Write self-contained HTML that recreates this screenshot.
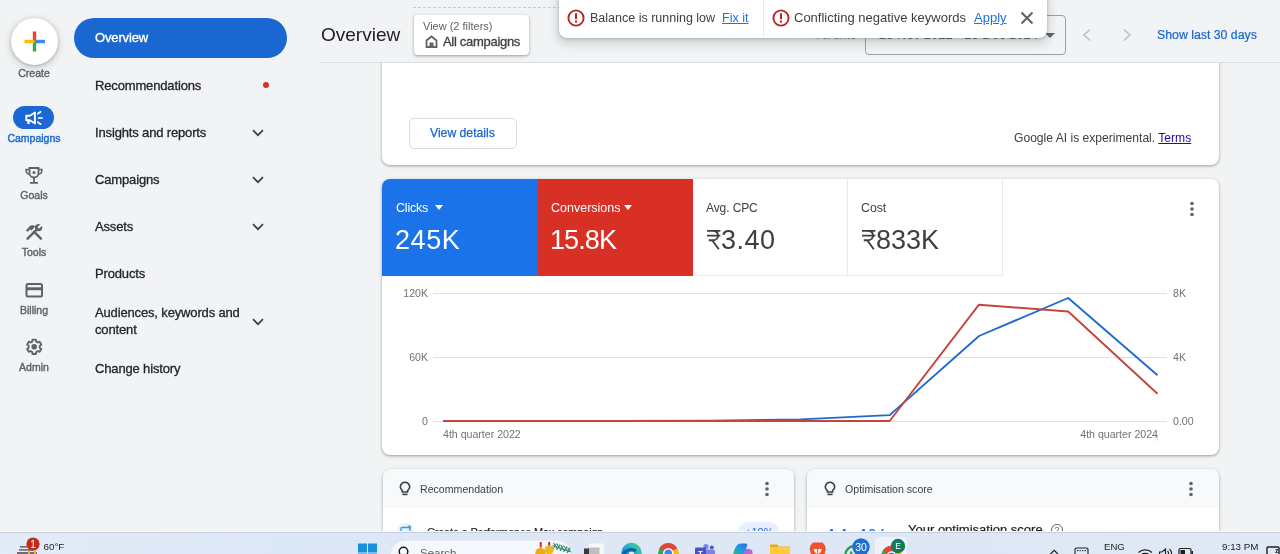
<!DOCTYPE html>
<html><head><meta charset="utf-8">
<style>
*{box-sizing:border-box;margin:0;padding:0}
html,body{will-change:transform;width:1280px;height:554px;overflow:hidden;background:#f1f3f4;font-family:"Liberation Sans",sans-serif;color:#202124;position:relative}
.a{position:absolute;white-space:nowrap}
.rail-lbl{position:absolute;left:0;width:68px;text-align:center;font-size:10.5px;color:#5f6368;line-height:12px;-webkit-text-stroke-width:.4px}
.nav{position:absolute;left:95px;font-size:13px;color:#232528;line-height:16px;-webkit-text-stroke-width:.3px;letter-spacing:-.15px;white-space:nowrap}
.chev{position:absolute;left:251px;width:14px;height:14px}
.card{position:absolute;background:#fff;border-radius:8px;box-shadow:0 1px 2px rgba(60,64,67,.3),0 1px 3px 1px rgba(60,64,67,.15)}
</style></head>
<body>
<!-- left rail -->
<div class="a" style="left:11px;top:18px;width:47px;height:47px;border-radius:50%;background:#fff;box-shadow:0 1px 3px rgba(60,64,67,.3),0 2px 6px 2px rgba(60,64,67,.15)"></div>
<svg class="a" style="left:24px;top:31px" width="21" height="21" viewBox="0 0 21 21">
<rect x="8.8" y="0.5" width="3.4" height="10" fill="#ea4335"/>
<rect x="10.5" y="8.8" width="10.5" height="3.4" fill="#4285f4"/>
<rect x="8.8" y="10.5" width="3.4" height="10" fill="#34a853"/>
<rect x="0.5" y="8.8" width="10" height="3.4" fill="#fbbc04"/>
</svg>
<div class="rail-lbl" style="top:67px">Create</div>
<div class="a" style="left:13px;top:106px;width:41px;height:23px;border-radius:12px;background:#1b67d3"></div>
<svg class="a" style="left:14px;top:100px" width="40" height="30" viewBox="14 100 40 30"><path d="M26.3 115.7h3.6l5-3.2v11l-5-3.2h-3.6z" fill="none" stroke="#fff" stroke-width="1.9" stroke-linejoin="round"/><rect x="27.3" y="120" width="2.4" height="4" fill="#fff"/><path d="M37.8 113.8l2.8-2M38.6 118h3.6M37.8 122.2l2.8 2" stroke="#fff" stroke-width="1.7" stroke-linecap="round"/></svg>
<div class="rail-lbl" style="top:132px;color:#1b67d3">Campaigns</div>
<svg class="a" style="left:25px;top:167px" width="18" height="17" viewBox="0 0 18 17"><path d="M4.5 1h9v5a4.5 4.5 0 0 1-9 0z" fill="none" stroke="#5f6368" stroke-width="1.8"/><path d="M4.5 2.5H1.2v1.5a3 3 0 0 0 3.3 3M13.5 2.5h3.3v1.5a3 3 0 0 1-3.3 3" fill="none" stroke="#5f6368" stroke-width="1.6"/><circle cx="9" cy="5.5" r="1.5" fill="#5f6368"/><path d="M9 10.5v4.5M5 15.8h8" stroke="#5f6368" stroke-width="1.8"/></svg>
<div class="rail-lbl" style="top:189px">Goals</div>
<svg class="a" style="left:20px;top:220px" width="28" height="24" viewBox="20 220 28 24"><path d="M27.6 238.6L36.4 229.8" stroke="#5f6368" stroke-width="2.5" stroke-linecap="round"/><circle cx="38.6" cy="227.6" r="3.7" fill="#5f6368"/><path d="M38.9 227.3l3.2-3.2" stroke="#f1f3f4" stroke-width="2.3" stroke-linecap="round"/><path d="M40.9 238.6L34.2 231.9" stroke="#5f6368" stroke-width="2.5" stroke-linecap="round"/><path d="M25.8 230.4l4.6-4.8 3.4-.4 1.4 1.4-3.6 3.9-1.6-1-2.2 2.2z" fill="#5f6368"/></svg>
<div class="rail-lbl" style="top:246px">Tools</div>
<svg class="a" style="left:25px;top:282px" width="18" height="16" viewBox="0 0 18 16"><rect x="1.5" y="2" width="15.5" height="12.6" rx="1.6" fill="none" stroke="#5f6368" stroke-width="2"/><rect x="1.5" y="5.3" width="15.5" height="2.9" fill="#5f6368"/></svg>
<div class="rail-lbl" style="top:304px">Billing</div>
<svg class="a" style="left:20px;top:334px" width="28" height="26" viewBox="20 334 28 26"><path d="M32.54 339.59 L35.86 339.59 L36.21 341.57 L37.72 342.45 L39.61 341.75 L41.28 344.64 L39.73 345.92 L39.73 347.68 L41.28 348.96 L39.61 351.85 L37.72 351.15 L36.21 352.03 L35.86 354.01 L32.54 354.01 L32.19 352.03 L30.68 351.15 L28.79 351.85 L27.12 348.96 L28.67 347.68 L28.67 345.92 L27.12 344.64 L28.79 341.75 L30.68 342.45 L32.19 341.57Z" fill="none" stroke="#5f6368" stroke-width="1.9" stroke-linejoin="round"/><circle cx="34.2" cy="346.8" r="2.8" fill="#5f6368"/></svg>
<div class="rail-lbl" style="top:361px">Admin</div>

<!-- nav -->
<div class="a" style="left:74px;top:18px;width:213px;height:39.5px;border-radius:20px;background:#1a67d2"></div>
<div class="nav" style="top:30px;color:#fff;-webkit-text-stroke-width:.35px">Overview</div>
<div class="nav" style="top:78px">Recommendations</div>
<div class="a" style="left:263px;top:82px;width:6px;height:6px;border-radius:50%;background:#d93025"></div>
<div class="nav" style="top:125px">Insights and reports</div>
<div class="nav" style="top:172px">Campaigns</div>
<div class="nav" style="top:219px">Assets</div>
<div class="nav" style="top:266px">Products</div>
<div class="nav" style="top:304px;line-height:17px">Audiences, keywords and<br>content</div>
<div class="nav" style="top:361px">Change history</div>
<svg class="a" style="left:251px;top:128px" width="14" height="9" viewBox="0 0 14 9"><path d="M2 2.2L7 7.2l5-5" fill="none" stroke="#3c4043" stroke-width="1.7"/></svg>
<svg class="a" style="left:251px;top:175px" width="14" height="9" viewBox="0 0 14 9"><path d="M2 2.2L7 7.2l5-5" fill="none" stroke="#3c4043" stroke-width="1.7"/></svg>
<svg class="a" style="left:251px;top:222px" width="14" height="9" viewBox="0 0 14 9"><path d="M2 2.2L7 7.2l5-5" fill="none" stroke="#3c4043" stroke-width="1.7"/></svg>
<svg class="a" style="left:251px;top:317px" width="14" height="9" viewBox="0 0 14 9"><path d="M2 2.2L7 7.2l5-5" fill="none" stroke="#3c4043" stroke-width="1.7"/></svg>


<!-- header -->
<div class="a" style="left:320px;top:62px;width:960px;height:1px;background:#dadce0"></div>
<div class="a" style="left:413px;top:7px;width:148px;height:0;border-top:1px dashed #c8cbcf"></div>
<div class="a" style="left:321px;top:23px;font-size:19px;line-height:24px;color:#202124">Overview</div>
<div class="a" style="left:414px;top:15px;width:115px;height:40px;background:#fff;border-radius:4px;box-shadow:0 1px 2px rgba(60,64,67,.3),0 1px 3px 1px rgba(60,64,67,.15)"></div>
<div class="a" style="left:423px;top:20px;font-size:11px;line-height:13px;color:#5f6368">View (2 filters)</div>
<svg class="a" style="left:425px;top:35px" width="13" height="13" viewBox="0 0 13 13"><path d="M1.5 12V5.5L6.5 1.5l5 4V12z" fill="none" stroke="#5f6368" stroke-width="1.8"/><rect x="4.5" y="7.5" width="4" height="4.5" fill="#5f6368"/></svg>
<div class="a" style="left:443px;top:34px;font-size:13px;line-height:16px;color:#3c4043;-webkit-text-stroke-width:.3px;letter-spacing:-.3px">All campaigns</div>

<!-- behind-toast date -->
<div class="a" style="left:817px;top:27px;font-size:12px;line-height:16px;color:#70757a">All time</div>
<div class="a" style="left:865px;top:15px;width:201px;height:40px;border:1px solid #9aa0a6;border-radius:4px"></div>
<div class="a" style="left:879px;top:27px;font-size:13px;line-height:16px;color:#5f6368">25 Nov 2022 - 25 Dec 2024</div>
<div class="a" style="left:1045px;top:33px;width:0;height:0;border-left:5px solid transparent;border-right:5px solid transparent;border-top:5px solid #5f6368"></div>
<svg class="a" style="left:1081px;top:28px" width="11" height="14" viewBox="0 0 11 14"><path d="M9 1.5L3 7l6 5.5" fill="none" stroke="#bdc1c6" stroke-width="1.6"/></svg>
<svg class="a" style="left:1122px;top:28px" width="11" height="14" viewBox="0 0 11 14"><path d="M2 1.5L8 7l-6 5.5" fill="none" stroke="#bdc1c6" stroke-width="1.6"/></svg>
<div class="a" style="left:1157px;top:27px;font-size:12.3px;line-height:16px;color:#1967d2;-webkit-text-stroke-width:.2px">Show last 30 days</div>

<!-- toast -->
<div class="a" style="left:559px;top:-10px;width:488px;height:48px;background:#fff;border-radius:8px;box-shadow:0 1px 3px rgba(60,64,67,.3),0 4px 8px 3px rgba(60,64,67,.15)"></div>
<div class="a" style="left:763px;top:0;width:1px;height:37px;background:#e8eaed"></div>
<svg class="a" style="left:567px;top:9px" width="18" height="18" viewBox="0 0 18 18"><circle cx="9" cy="9" r="7.6" fill="none" stroke="#b9261f" stroke-width="1.9"/><rect x="8" y="4.3" width="2" height="6" fill="#b9261f"/><rect x="8" y="11.6" width="2" height="2" fill="#b9261f"/></svg>
<div class="a" style="left:590px;top:10px;font-size:12.5px;line-height:16px;color:#3c4043">Balance is running low</div>
<div class="a" style="left:722px;top:10px;font-size:12.5px;line-height:16px;color:#1a73e8;text-decoration:underline">Fix it</div>
<svg class="a" style="left:772px;top:9px" width="18" height="18" viewBox="0 0 18 18"><circle cx="9" cy="9" r="7.6" fill="none" stroke="#b9261f" stroke-width="1.9"/><rect x="8" y="4.3" width="2" height="6" fill="#b9261f"/><rect x="8" y="11.6" width="2" height="2" fill="#b9261f"/></svg>
<div class="a" style="left:794px;top:10px;font-size:13px;line-height:16px;color:#3c4043">Conflicting negative keywords</div>
<div class="a" style="left:974px;top:10px;font-size:13px;line-height:16px;color:#1a73e8;text-decoration:underline">Apply</div>
<svg class="a" style="left:1020px;top:11px" width="14" height="14" viewBox="0 0 14 14"><path d="M1.5 1.5l11 11M12.5 1.5l-11 11" stroke="#5f6368" stroke-width="2"/></svg>

<!-- card 1 -->
<div class="card" style="left:382px;top:42px;width:837px;height:123px;clip-path:inset(21px -10px -10px -10px)"></div>
<div class="a" style="left:409px;top:118px;width:108px;height:31px;border:1px solid #dadce0;border-radius:5px"></div>
<div class="a" style="left:430px;top:125px;font-size:12.2px;line-height:16px;color:#1967d2;-webkit-text-stroke-width:.25px">View details</div>
<div class="a" style="left:1014px;top:130px;font-size:12.1px;line-height:16px;color:#3c4043">Google AI is experimental. <span style="color:#1a0dab;text-decoration:underline">Terms</span></div>

<!-- card 2 -->
<div class="card" style="left:382px;top:179px;width:837px;height:276px;overflow:hidden">
  <div class="a" style="left:0;top:0;width:156px;height:97px;background:#1a73e8"></div>
  <div class="a" style="left:156px;top:0;width:155px;height:97px;background:#d93025"></div>
  <div class="a" style="left:465px;top:0;width:1px;height:97px;background:#e8eaed"></div>
  <div class="a" style="left:620px;top:0;width:1px;height:97px;background:#e8eaed"></div>
  <div class="a" style="left:311px;top:96px;width:310px;height:1px;background:#e8eaed"></div>
</div>
<div class="a" style="left:396px;top:200px;font-size:12.5px;letter-spacing:-.2px;line-height:16px;color:#fff">Clicks</div>
<div class="a" style="left:434.5px;top:205px;width:0;height:0;border-left:4.5px solid transparent;border-right:4.5px solid transparent;border-top:5px solid #fff"></div>
<div class="a" style="left:395px;top:225px;font-size:27px;line-height:30px;color:#fff;letter-spacing:.6px">245K</div>
<div class="a" style="left:551px;top:200px;font-size:12.5px;letter-spacing:0;line-height:16px;color:#fff">Conversions</div>
<div class="a" style="left:624px;top:205px;width:0;height:0;border-left:4.5px solid transparent;border-right:4.5px solid transparent;border-top:5px solid #fff"></div>
<div class="a" style="left:550px;top:225px;font-size:27px;line-height:30px;color:#fff;letter-spacing:-.9px">15.8K</div>
<div class="a" style="left:706px;top:200px;font-size:12px;letter-spacing:-.1px;line-height:16px;color:#3c4043">Avg. CPC</div>
<svg class="a" style="left:707px;top:229px" width="16" height="21" viewBox="0 -1 16 21"><path d="M0 0.9H13.4M0 5.6H13.4M2.5 0.9H5.5C9.2 0.9 11 2.8 11 5.4C11 8.2 9 10.3 5.5 10.3H1.8M5.2 10.3L11.8 19.2" fill="none" stroke="#3c4043" stroke-width="1.9"/></svg>
<div class="a" style="left:721px;top:225px;font-size:27px;line-height:30px;color:#3c4043;letter-spacing:.5px">3.40</div>
<div class="a" style="left:861px;top:200px;font-size:12.3px;letter-spacing:0;line-height:16px;color:#3c4043">Cost</div>
<svg class="a" style="left:862px;top:229px" width="16" height="21" viewBox="0 -1 16 21"><path d="M0 0.9H13.4M0 5.6H13.4M2.5 0.9H5.5C9.2 0.9 11 2.8 11 5.4C11 8.2 9 10.3 5.5 10.3H1.8M5.2 10.3L11.8 19.2" fill="none" stroke="#3c4043" stroke-width="1.9"/></svg>
<div class="a" style="left:876px;top:225px;font-size:27px;line-height:30px;color:#3c4043">833K</div>
<svg class="a" style="left:1189px;top:201px" width="6" height="16" viewBox="0 0 6 16"><circle cx="3" cy="2.5" r="1.8" fill="#5f6368"/><circle cx="3" cy="8" r="1.8" fill="#5f6368"/><circle cx="3" cy="13.5" r="1.8" fill="#5f6368"/></svg>
<svg class="a" style="left:382px;top:280px" width="837" height="170" viewBox="382 280 837 170">
  <g stroke="#e0e0e0" stroke-width="1">
    <line x1="433" y1="293.5" x2="1167" y2="293.5"/>
    <line x1="433" y1="357.5" x2="1167" y2="357.5"/>
    <line x1="433" y1="421.5" x2="1167" y2="421.5"/>
  </g>
  <g font-family="Liberation Sans" font-size="11" fill="#6f7378">
    <text x="428" y="297" text-anchor="end" font-size="10.6">120K</text>
    <text x="428" y="361" text-anchor="end" font-size="10.6">60K</text>
    <text x="428" y="425" text-anchor="end" font-size="10.6">0</text>
    <text x="1173" y="297" font-size="10.6">8K</text>
    <text x="1173" y="361" font-size="10.6">4K</text>
    <text x="1173" y="425" font-size="10.6">0.00</text>
    <text x="443" y="438" font-size="10.6">4th quarter 2022</text>
    <text x="1158" y="438" text-anchor="end" font-size="10.6">4th quarter 2024</text>
  </g>
  <line x1="1157.5" y1="436" x2="1157.5" y2="441" stroke="#dadce0" stroke-width="1"/>
  <polyline fill="none" stroke="#2069d4" stroke-width="1.9" stroke-linejoin="round" points="443.3,421 532.6,421 621.9,421 711.1,420.8 800.4,419.4 889.7,415.1 979,336 1068.2,298 1157.5,375.3"/>
  <polyline fill="none" stroke="#c4463a" stroke-width="1.9" stroke-linejoin="round" points="443.3,421 532.6,421 621.9,421 711.1,421 800.4,421 889.7,421 979,304.7 1068.2,311.5 1157.5,393.8"/>
</svg>

<!-- card 3/4 -->
<div class="card" style="left:383px;top:469px;width:411px;height:120px;overflow:hidden">
  <div class="a" style="left:0;top:0;width:411px;height:39px;background:#f8f9fa"></div>
</div>
<svg class="a" style="left:399px;top:481px" width="12" height="15" viewBox="0 0 12 15"><path d="M6 1.2a4.6 4.6 0 0 0-2.6 8.4V11h5.2V9.6A4.6 4.6 0 0 0 6 1.2z" fill="none" stroke="#3c4043" stroke-width="1.6"/><rect x="3.4" y="12.6" width="5.2" height="1.6" fill="#3c4043"/></svg>
<div class="a" style="left:420px;top:482px;font-size:10.6px;line-height:14px;color:#3c4043">Recommendation</div>
<svg class="a" style="left:764px;top:481px" width="6" height="16" viewBox="0 0 6 16"><circle cx="3" cy="2.5" r="1.8" fill="#5f6368"/><circle cx="3" cy="8" r="1.8" fill="#5f6368"/><circle cx="3" cy="13.5" r="1.8" fill="#5f6368"/></svg>
<div class="a" style="left:397px;top:523px;width:16px;height:16px;border-radius:50%;background:#e0f5fa"></div>
<svg class="a" style="left:398px;top:524px" width="16" height="10" viewBox="398 524 16 10"><rect x="401" y="527.5" width="9" height="7" rx="1" fill="none" stroke="#4a90d9" stroke-width="1.3"/><path d="M409.5 525v4M407.5 527h4" stroke="#4a90d9" stroke-width="1.2"/></svg>
<div class="a" style="left:427px;top:524px;font-size:11px;letter-spacing:-.2px;line-height:16px;color:#202124;-webkit-text-stroke-width:.15px">Create a Performance Max campaign</div>
<div class="a" style="left:737px;top:522px;width:43px;height:24px;border-radius:12px;background:#e8f0fe"></div>
<div class="a" style="left:745px;top:524px;font-size:11px;line-height:16px;color:#1967d2">+10%</div>

<div class="card" style="left:807px;top:469px;width:412px;height:120px;overflow:hidden">
  <div class="a" style="left:0;top:0;width:412px;height:39px;background:#f8f9fa"></div>
</div>
<svg class="a" style="left:824px;top:481px" width="12" height="15" viewBox="0 0 12 15"><path d="M6 1.2a4.6 4.6 0 0 0-2.6 8.4V11h5.2V9.6A4.6 4.6 0 0 0 6 1.2z" fill="none" stroke="#3c4043" stroke-width="1.6"/><rect x="3.4" y="12.6" width="5.2" height="1.6" fill="#3c4043"/></svg>
<div class="a" style="left:845px;top:482px;font-size:10.6px;line-height:14px;color:#3c4043">Optimisation score</div>
<svg class="a" style="left:1188px;top:481px" width="6" height="16" viewBox="0 0 6 16"><circle cx="3" cy="2.5" r="1.8" fill="#5f6368"/><circle cx="3" cy="8" r="1.8" fill="#5f6368"/><circle cx="3" cy="13.5" r="1.8" fill="#5f6368"/></svg>
<div class="a" style="left:823px;top:524px;font-size:23px;line-height:28px;color:#1a73e8">44.4%</div>
<div class="a" style="left:908px;top:522px;font-size:13px;line-height:16px;color:#202124;-webkit-text-stroke-width:.2px">Your optimisation score</div>
<div class="a" style="left:1051px;top:524px;width:12px;height:12px;border-radius:50%;border:1.2px solid #5f6368;font-size:9px;line-height:10px;text-align:center;color:#5f6368">?</div>

<!-- taskbar -->
<div class="a" style="left:0;top:532px;width:1280px;height:22px;background:linear-gradient(90deg,#e2ebf6,#dce7f8 22%,#dfe7f6 50%,#dde7f6 75%,#e0e9f5);border-top:1px solid #c6cfdb;box-shadow:0 -1px 0 #f6f8fb"></div>

<div class="a" style="left:0;top:533px;width:1280px;height:21px;overflow:hidden">
<svg class="a" style="left:0;top:0" width="1280" height="21" viewBox="0 533 1280 21">
  <!-- weather -->
  <rect x="20" y="546" width="7" height="1.6" fill="#6b6b6b"/>
  <rect x="19" y="549" width="15" height="1.8" fill="#7a7a7a"/>
  <rect x="17" y="552" width="20" height="3" fill="#6e6e6e"/>
  <rect x="28" y="551" width="2" height="4" fill="#f0b429"/><rect x="34" y="551" width="2" height="4" fill="#f0b429"/>
  <circle cx="33" cy="544" r="6.6" fill="#c42b1c"/>
  <text x="33" y="548" font-family="Liberation Sans" font-size="10" fill="#fff" text-anchor="middle">1</text>
  <text x="43.5" y="549.5" font-family="Liberation Sans" font-size="9.8" fill="#1f1f1f">60°F</text>
  <!-- windows -->
  <rect x="358" y="543.5" width="9" height="9" fill="#1a8fe0"/><rect x="368" y="543.5" width="9" height="9" fill="#1a8fe0"/>
  <rect x="358" y="553.5" width="9" height="9" fill="#1a8fe0"/><rect x="368" y="553.5" width="9" height="9" fill="#1a8fe0"/>
  <!-- search pill -->
  <rect x="390" y="540" width="182" height="30" rx="15" fill="#f5f8fd" stroke="#dfe4ec" stroke-width="1"/>
  <circle cx="403.5" cy="551.5" r="4.3" fill="none" stroke="#1f1f1f" stroke-width="1.5"/>
  <text x="420" y="557" font-family="Liberation Sans" font-size="11.5" fill="#5c5c5c">Search</text>
  <!-- decor -->
  <g stroke="#2f8f6c" stroke-width="1.1">
    <path d="M552.5 545.5l18 6.5"/>
    <path d="M553 549l3.5-5.5M556.5 550l3.5-5.5M560 551l3.5-5.5M563.5 552l3.5-5.5M567 553l3.2-5"/>
    <path d="M553.5 543l4 6M557 544l4 6M560.5 545l4 6M564 546l4 6M567.5 547.5l3 4.5"/>
  </g>
  <rect x="539.8" y="542" width="1.9" height="5.5" fill="#c0283a"/><rect x="548.2" y="542" width="2" height="5" fill="#c0283a"/>
  <circle cx="540.5" cy="553" r="5.2" fill="#e6ad16"/><circle cx="549.2" cy="549.8" r="4.6" fill="#f0b820"/>
  <path d="M545 555l8 0" stroke="#d39a10" stroke-width="2"/>
  <!-- task view -->
  <rect x="589" y="543.5" width="15" height="14" fill="#f7f7f7"/>
  <rect x="588.5" y="547.5" width="11" height="10" fill="#bfbfbf"/>
  <rect x="584" y="548.5" width="5" height="9" fill="#3a3a3a"/>
  <!-- edge -->
  <defs>
    <linearGradient id="eg" x1="0" y1="1" x2="1" y2="0"><stop offset="0" stop-color="#0c6fc8"/><stop offset=".45" stop-color="#1fa6d8"/><stop offset="1" stop-color="#56d77a"/></linearGradient>
  </defs>
  <circle cx="631.5" cy="553" r="10.2" fill="url(#eg)"/>
  <path d="M623 556a8.5 8.5 0 0 1 13-5" stroke="#0a5fb0" stroke-width="3.2" fill="none"/>
  <circle cx="631.5" cy="554.5" r="2.8" fill="#e9f3fb"/>
  <!-- chrome -->
  <circle cx="668.3" cy="553.3" r="10.2" fill="#34a853"/>
  <path d="M668.3 553.3L659.5 548.2A10.2 10.2 0 0 1 677.1 548.2z" fill="#ea4335"/>
  <path d="M668.3 553.3L677.1 548.2A10.2 10.2 0 0 1 673.4 562.1z" fill="#fbbc04"/>
  <circle cx="668.3" cy="553.3" r="5.3" fill="#fff"/><circle cx="668.3" cy="553.3" r="3.8" fill="#4285f4"/>
  <!-- teams -->
  <circle cx="706" cy="546.5" r="2.6" fill="#7b83eb"/><circle cx="711.8" cy="547.5" r="2" fill="#5059c9"/>
  <rect x="701" y="549.5" width="14" height="8" rx="2" fill="#7b83eb"/>
  <rect x="695" y="547.5" width="11" height="10" rx="1" fill="#4b53bc"/>
  <text x="700.5" y="556" font-family="Liberation Sans" font-size="8" font-weight="bold" fill="#fff" text-anchor="middle">T</text>
  <!-- copilot -->
  <defs><linearGradient id="cg1" x1="0" y1="1" x2="1" y2="0"><stop offset="0" stop-color="#3bbd5e"/><stop offset=".5" stop-color="#1f9be0"/><stop offset="1" stop-color="#2d6fe0"/></linearGradient>
  <linearGradient id="cg2" x1="0" y1="0" x2="1" y2="1"><stop offset="0" stop-color="#8c6cf0"/><stop offset="1" stop-color="#e35dc0"/></linearGradient></defs>
  <path d="M733 556c1-7 3.5-12.5 8-12.5h4.5c1.5 0 2 1 1.5 2.5l-3.5 10z" fill="url(#cg1)"/>
  <path d="M745 549h4c2.5 0 4 2 3.5 4.5l-.5 3h-9.5z" fill="url(#cg2)"/>
  <!-- folder -->
  <path d="M770 544.5h7l2 2h11v12h-20z" fill="#e8a91a"/>
  <rect x="770" y="547" width="20" height="11" fill="#ffcb3d"/>
  <!-- brave -->
  <path d="M810.5 545.5l2.5-3h9.5l2.5 3 .8 3.5-1.3 5.5-4 3.5h-5.5l-4-3.5-1.3-5.5z" fill="#f0522a"/>
  <path d="M813.5 549.5l2.5-.8 1.7 1.3 1.7-1.3 2.5.8-1.2 2.5-3 2.5-3-2.5z" fill="#fff"/>
  <path d="M817.7 550v5" stroke="#f0522a" stroke-width="1"/>
  <!-- whatsapp -->
  <circle cx="854.5" cy="555" r="9" fill="none" stroke="#25a244" stroke-width="2.3"/>
  <path d="M851 551.5c0 3 2.5 6 5.5 6.5" stroke="#25a244" stroke-width="2.2" fill="none"/>
  <circle cx="861" cy="547" r="8.7" fill="#1d6fd1"/>
  <text x="861" y="550.8" font-family="Liberation Sans" font-size="10.5" fill="#fff" text-anchor="middle">30</text>
  <!-- active chrome -->
  <rect x="875" y="537" width="32" height="30" rx="4" fill="#eef2f8"/>
  <circle cx="891.5" cy="556" r="10.2" fill="#34a853"/>
  <path d="M891.5 556L882.7 550.9A10.2 10.2 0 0 1 900.3 550.9z" fill="#ea4335"/>
  <path d="M891.5 556L900.3 550.9A10.2 10.2 0 0 1 896.6 564.8z" fill="#fbbc04"/>
  <circle cx="891.5" cy="556" r="4.8" fill="#fff"/><circle cx="891.5" cy="556" r="3.6" fill="#4285f4"/>
  <circle cx="898" cy="546" r="7.2" fill="#0f7b5a"/>
  <text x="898" y="549.3" font-family="Liberation Sans" font-size="8.5" fill="#fff" text-anchor="middle">E</text>
  <!-- tray -->
  <path d="M1049.5 555l4.7-4.6 4.7 4.6" fill="none" stroke="#1f1f1f" stroke-width="1.2"/>
  <rect x="1075" y="548" width="13" height="9" rx="1.5" fill="none" stroke="#1f1f1f" stroke-width="1.1"/>
  <g fill="#1f1f1f"><rect x="1077" y="550" width="1.2" height="1.2"/><rect x="1079.5" y="550" width="1.2" height="1.2"/><rect x="1082" y="550" width="1.2" height="1.2"/><rect x="1084.5" y="550" width="1.2" height="1.2"/></g>
  <text x="1104" y="550" font-family="Liberation Sans" font-size="9.6" fill="#1f1f1f">ENG</text>
  <path d="M1138.5 552.5a10 10 0 0 1 13.5 0M1141 555a6.2 6.2 0 0 1 8.5 0" fill="none" stroke="#1f1f1f" stroke-width="1.3"/>
  <path d="M1159.5 552h2.5l3.5-3v9l-3.5-3h-2.5z" fill="none" stroke="#1f1f1f" stroke-width="1.1"/>
  <path d="M1167.5 551a3.5 3.5 0 0 1 0 5M1169.5 549a6 6 0 0 1 0 9" fill="none" stroke="#1f1f1f" stroke-width="1.1"/>
  <rect x="1179" y="548.5" width="12" height="8" rx="1.5" fill="none" stroke="#1f1f1f" stroke-width="1.2"/>
  <rect x="1180.5" y="550" width="4.5" height="5" fill="#1f1f1f"/><rect x="1191.5" y="551" width="1.5" height="3" fill="#1f1f1f"/>
  <text x="1258.5" y="549.5" font-family="Liberation Sans" font-size="9.8" fill="#1f1f1f" text-anchor="end">9:13 PM</text>
  <rect x="1267" y="547" width="12" height="10" rx="1" fill="none" stroke="#1f1f1f" stroke-width="1.4"/>
  <text x="1275" y="553" font-family="Liberation Sans" font-size="7" font-weight="bold" fill="#1f1f1f">z</text>
</svg>
</div>
</body></html>
